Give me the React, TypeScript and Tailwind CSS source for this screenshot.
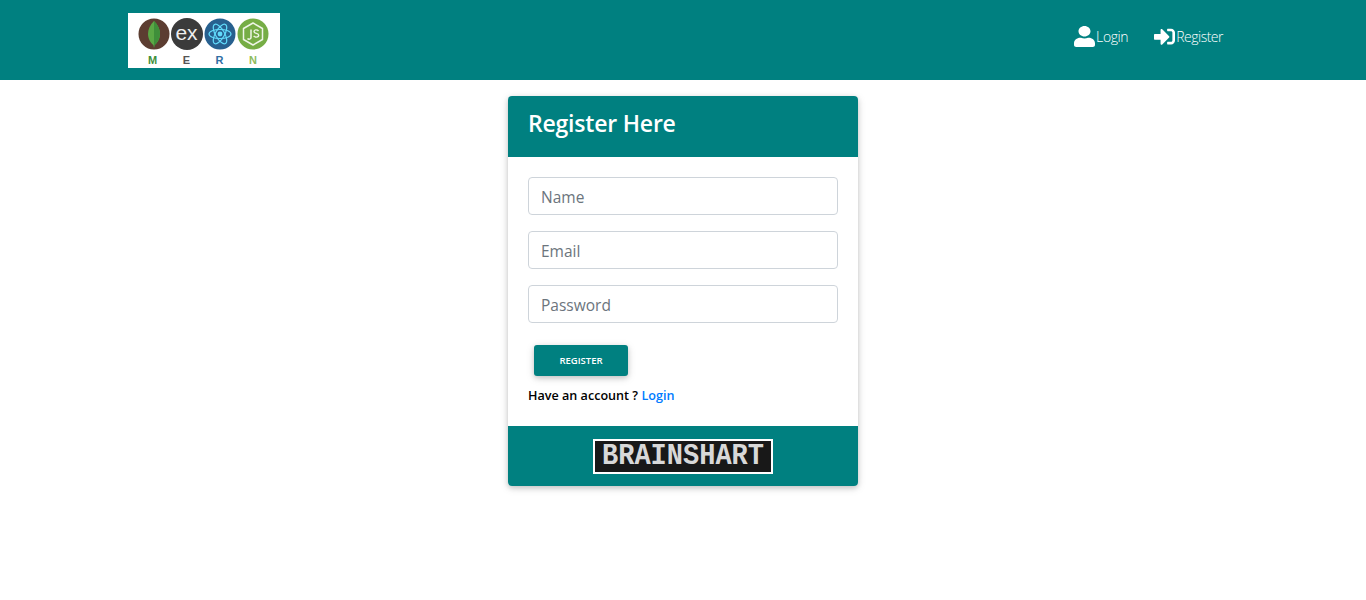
import { FaSignInAlt, FaUser } from 'react-icons/fa';

const font = 'font-["Open_Sans","Noto_Sans",sans-serif]';

const MernLogo = () => (
  <div className="flex h-[55px] w-[152px] flex-col items-center bg-white pt-[5px]">
    <div className="mr-[2px] flex h-[32px] gap-[1px]">
      <svg width="32" height="32" viewBox="0 0 32 32">
        <circle cx="16" cy="16" r="15.5" fill="#5c3d31" />
        <path d="M16 3c4 4 6 8 6 13 0 5-3 9-5.400 11l-.6 3-.6-3C13 25 10 21 10 16c0-5 2-9 6-13z" fill="#5aa845" />
        <path d="M16 3c4 4 6 8 6 13 0 5-3 9-5.400 11l-.6 3z" fill="#3f8f3a" />
      </svg>
      <div className="flex h-[32px] w-[32px] items-center justify-center rounded-full bg-[#3b3b3b] pb-[3px] font-['Liberation_Sans',sans-serif] text-[21px] leading-none text-[#eeeeee]">
        ex
      </div>
      <svg width="32" height="32" viewBox="0 0 32 32" fill="none">
        <circle cx="16" cy="16" r="15.500" fill="#27608f" />
        <circle cx="16" cy="16" r="2.400" fill="#61dafb" />
        <g stroke="#61dafb" strokeWidth="1.200">
          <ellipse cx="16" cy="16" rx="11" ry="4.500" />
          <ellipse cx="16" cy="16" rx="11" ry="4.500" transform="rotate(60 16 16)" />
          <ellipse cx="16" cy="16" rx="11" ry="4.500" transform="rotate(120 16 16)" />
        </g>
      </svg>
      <svg width="32" height="32" viewBox="0 0 32 32" fill="none">
        <circle cx="16" cy="16" r="15.500" fill="#76ad45" />
        <path d="M16 5l9.500 5.500v11L16 27l-9.500-5.500v-11z" stroke="#eef5e6" strokeWidth="1.500" strokeLinejoin="round" />
        <path d="M14 11.500v8c0 2-2.500 2-3.500 1" stroke="#eef5e6" strokeWidth="1.500" />
        <path d="M21.500 13c-1-1.500-4.500-1.700-4.500.5 0 2.500 4.700 1.200 4.700 3.800 0 2.400-3.900 2.300-5 .6" stroke="#eef5e6" strokeWidth="1.400" />
      </svg>
    </div>
    <div className="mr-[3px] mt-[4px] flex w-[109px] justify-between font-['Liberation_Sans',sans-serif] text-[11px] font-bold leading-[12px]">
      <span className="text-[#3f8f3a]">M</span>
      <span className="text-[#555555]">E</span>
      <span className="text-[#2f6ea3]">R</span>
      <span className="text-[#8dbb5c]">N</span>
    </div>
  </div>
);

export default function App() {
  return (
    <div className={`min-h-[600px] bg-white ${font}`}>
      <nav className="flex h-20 items-center justify-between bg-[#008080] pl-[128px] pr-[143px]">
        <MernLogo />
        <div className="mb-2 flex items-center gap-[26px] text-[14px] font-light text-white">
          <a href="#" className="flex items-center tracking-[-0.4px]">
            <FaUser preserveAspectRatio="none" className="mr-px h-[21px] w-[21px]" />
            Login
          </a>
          <a href="#" className="flex items-center tracking-[-0.5px]">
            <FaSignInAlt className="mr-px h-[21px] w-[21px]" />
            Register
          </a>
        </div>
      </nav>

      <div className="flex justify-center pt-4">
        <div className="w-[350px] overflow-hidden rounded bg-white shadow-[0_2px_5px_rgba(0,0,0,0.16),0_2px_10px_rgba(0,0,0,0.12)]">
          <div className="flex h-[61px] items-center bg-[#008080] px-5 pb-[6px]">
            <h3 className="text-[23px] font-semibold tracking-[-0.2px] text-white">Register Here</h3>
          </div>

          <form className="flex h-[269px] flex-col px-5 pt-5">
            <div className="flex flex-col gap-4">
              <input
                type="text"
                placeholder="Name"
                className="h-[38px] w-full rounded border border-[#ced4da] px-3 pt-[2px] text-[15.500px] placeholder:text-[#6c757d]"
              />
              <input
                type="email"
                placeholder="Email"
                className="h-[38px] w-full rounded border border-[#ced4da] px-3 pt-[2px] text-[15.500px] placeholder:text-[#6c757d]"
              />
              <input
                type="password"
                placeholder="Password"
                className="h-[38px] w-full rounded border border-[#ced4da] px-3 pt-[2px] text-[15.500px] placeholder:text-[#6c757d]"
              />
            </div>
            <button
              type="button"
              className="ml-[6px] mt-[22px] h-[31px] w-[94px] rounded-[3px] bg-[#008080] pt-[2px] text-[9.500px] font-semibold uppercase text-white shadow-[0_2px_5px_rgba(0,0,0,0.16),0_2px_10px_rgba(0,0,0,0.12)]"
            >
              Register
            </button>
            <p className="mt-[10px] text-[12.600px] font-semibold leading-[19px] text-black">
              Have an account ?{' '}
              <a href="#" className="text-[#007bff]">
                Login
              </a>
            </p>
          </form>

          <div className="flex h-[60px] justify-center bg-[#008080] pt-[13px]">
            <div className="flex h-[35px] w-[180px] items-center justify-center border-2 border-white bg-[#181818] font-['Liberation_Mono',monospace] text-[27px] font-bold leading-none text-[#d8d8d8]">
              <span className="scale-y-110">BRAINSHART</span>
            </div>
          </div>
        </div>
      </div>
    </div>
  );
}
